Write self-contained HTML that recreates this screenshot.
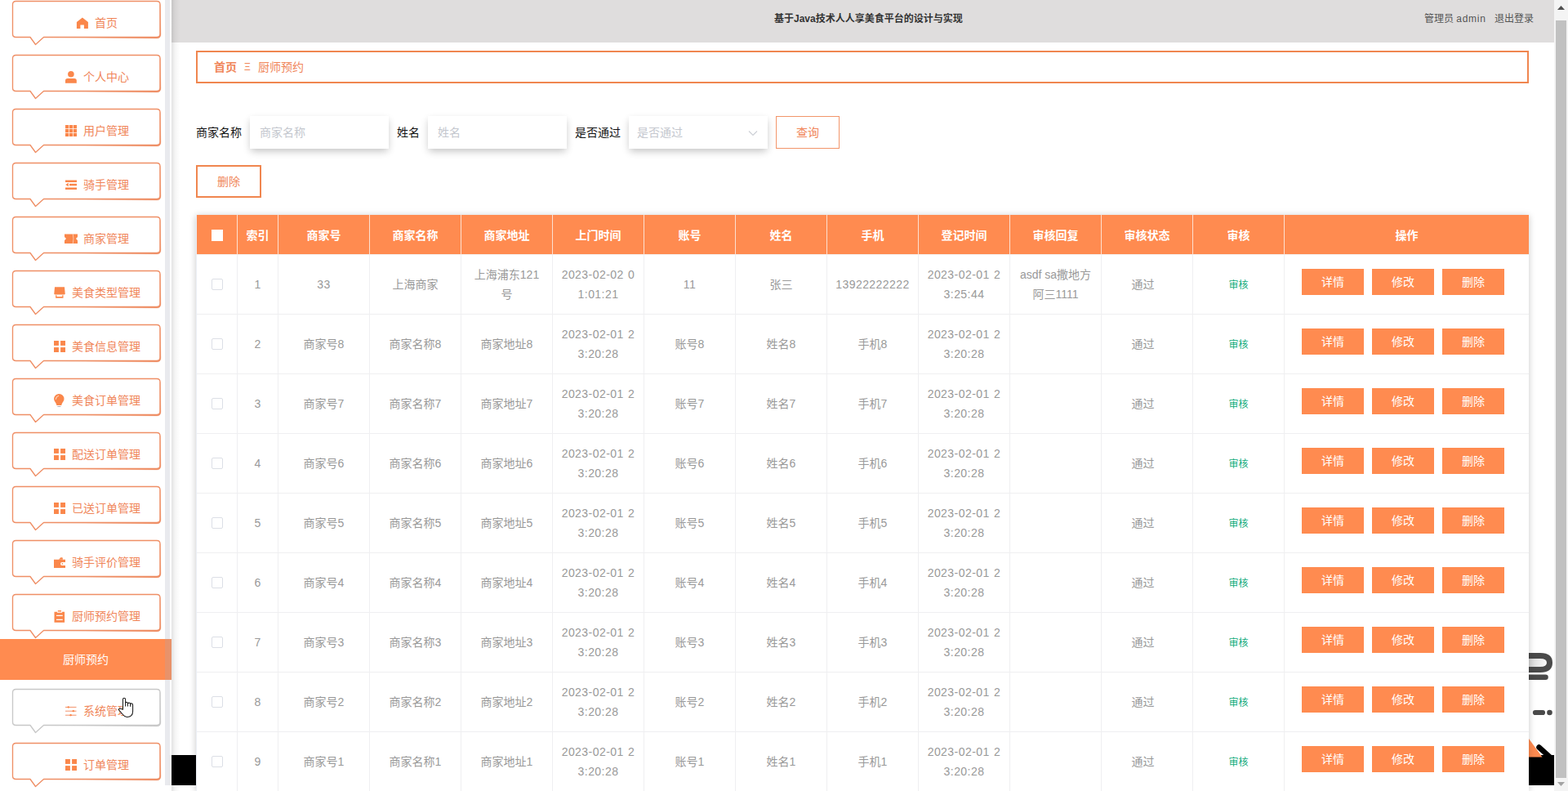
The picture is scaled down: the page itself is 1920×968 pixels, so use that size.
<!DOCTYPE html><html lang="zh"><head><meta charset="utf-8"><title>厨师预约</title><style>
*{box-sizing:border-box;margin:0;padding:0}
html,body{width:1920px;height:968px;overflow:hidden;background:#fff;font-family:"Liberation Sans","Noto Sans CJK SC",sans-serif;}
body{position:relative}
.abs{position:absolute}
#side{position:absolute;left:0;top:0;width:210px;height:968px;background:#fff;overflow:hidden}
#sscroll{position:absolute;left:202px;top:0;width:6px;height:961px;background:#e9eaee}
.mi{position:absolute;left:0;width:210px;height:56px}
.mi svg.bub{position:absolute;left:0;top:0}
.mi .lab{position:absolute;top:18px;height:20px;line-height:20px;font-size:14px;color:#f0865a;white-space:nowrap}
.mi svg.ic{position:absolute;top:21px;width:14px;height:14px;overflow:visible}
#act{position:absolute;left:0;top:782px;width:210px;height:50px;background:#ff8b50;color:#fff;font-size:14px;line-height:50px;text-align:center}
#hdr{position:absolute;left:210px;top:0;width:1693px;height:52px;background:#dfdddd}
#hdr .t{position:absolute;left:738px;top:15px;font-size:12px;font-weight:bold;color:#333;line-height:16px;white-space:nowrap}
#hdr .u{position:absolute;top:15px;font-size:12px;color:#555;line-height:16px;white-space:nowrap}
#shadowL{position:absolute;left:210px;top:0;width:10px;height:968px;background:linear-gradient(to right,rgba(0,0,0,.11),rgba(0,0,0,.04) 45%,rgba(0,0,0,0))}
#bc{position:absolute;left:240px;top:62px;width:1632px;height:40px;border:2px solid #f0864f;background:#fff;font-size:14px;color:#f0865a}
#bc span{position:absolute;top:8px;line-height:20px;white-space:nowrap}
.lbl{position:absolute;top:152px;font-size:14px;line-height:20px;color:#111;white-space:nowrap}
.inp{position:absolute;top:142px;width:170px;height:40px;background:#fff;box-shadow:0 4px 9px -1px rgba(0,0,0,.24);font-size:14px;color:#c4c7ce;line-height:40px;padding-left:12px;white-space:nowrap}
#qbtn{position:absolute;left:950px;top:142px;width:78px;height:40px;border:1px solid #f2956a;color:#f0865a;font-size:14px;line-height:38px;text-align:center;background:#fff}
#dbtn{position:absolute;left:240px;top:202px;width:80px;height:40px;border:2px solid #f0864f;color:#f0865a;font-size:14px;line-height:36px;text-align:center;background:#fff}
#tblwrap{position:absolute;left:240px;top:263px;width:1632px;height:705px;background:#fff;box-shadow:0 1px 8px rgba(0,0,0,.22);border-left:1px solid #ebeef5}
table{border-collapse:separate;border-spacing:0;table-layout:fixed;width:1631px;}
th{height:49px;border-bottom:1px solid #f4f0ee;background:#ff8b50;color:#fff;font-size:14px;font-weight:bold;text-align:center;border-right:1px solid #fde0d0;padding:2px 0 0 0;line-height:20px}
th:last-child{border-right:none}
td{height:73px;border-bottom:1px solid #efeff1;border-right:1px solid #efeff1;text-align:center;font-size:14px;line-height:24px;color:#999;padding:0 10px;vertical-align:middle}
td:last-child{border-right:none}
.cb{display:block;width:14px;height:14px;border:1px solid #dcdfe6;border-radius:2px;background:#fff;position:relative;left:18px;top:0}
th .cb{border-color:#fff;border-radius:0;top:0}
.sh{font-size:12px;color:#13ab7c}
.n{letter-spacing:.45px;word-spacing:1px}
.ops{position:relative;height:72px}
.btn{position:absolute;top:17px;width:76px;height:32px;background:#ff8b50;color:#fff;font-size:14px;line-height:32px;text-align:center}
#vs{position:absolute;left:1903px;top:0;width:17px;height:968px;background:#f4f4f4}
#vs .th{position:absolute;left:2px;top:25px;width:13px;height:927px;background:#c1c1c1}
</style></head><body>
<div class="abs" style="left:210px;top:924px;width:30px;height:37px;background:#000"></div>
<div class="abs" style="left:1872px;top:924px;width:31px;height:37px;background:#000"></div>
<svg class="abs" style="left:1872px;top:790px" width="31" height="140" viewBox="0 0 31 140"><defs><linearGradient id="ug" x1="0" x2="1" y1="0" y2="0"><stop offset="0" stop-color="#d4d4d4"/><stop offset="1" stop-color="#ffffff"/></linearGradient></defs><path d="M0,12.5 H14 Q25.5,12.5 25.5,21 Q25.5,29.5 14,29.5 H0 Z" fill="url(#ug)"/><path d="M0,12.5 H14 Q25.5,12.5 25.5,21 Q25.5,29.5 14,29.5 H0" fill="none" stroke="#4a4a4a" stroke-width="7"/><path d="M0,38.800 H20.500" stroke="#4a4a4a" stroke-width="6.600" stroke-linecap="round"/><path d="M8,82 H17" stroke="#4a4a4a" stroke-width="6.200" stroke-linecap="round"/><circle cx="25.500" cy="82" r="3.300" fill="#4a4a4a"/><path d="M0,114 L16.5,136.500 H0 Z" fill="#ff8b50"/><path d="M12.500,124.500 L33,143" fill="none" stroke="#000" stroke-width="6.500" stroke-linecap="round"/></svg>
<div id="hdr"><div class="t">基于Java技术人人享美食平台的设计与实现</div><div class="u" style="left:1534px">管理员 <span style="letter-spacing:.7px">admin</span></div><div class="u" style="left:1620px">退出登录</div></div>
<div id="side"><div id="sscroll"></div>
<div class="mi" style="top:0px"><svg class="bub" width="210" height="56" viewBox="0 0 210 56"><path d="M19.5,1.5 H192 Q196,1.5 196,5.5 V41.5 Q196,45.5 192,45.5 H53.5 L43.5,54.5 L37,45.5 H19.5 Q15.5,45.5 15.5,41.5 V5.5 Q15.5,1.5 19.5,1.5 Z" fill="#fff" stroke="#ef8f66" stroke-width="1.35" stroke-linejoin="round"/><path d="M60,45.5 H192 Q196,45.5 196,41.5 V5.5 L197,41.8 Q197,47 192,47 Z" fill="#ef8f66" stroke="#ef8f66" stroke-width="0.3"/></svg><svg class="ic" style="left:94px" viewBox="0 0 14 14" fill="#fa874b"><path d="M6.9,0.6 L13.9,5.9 V14 H8.9 V9.5 H4.4 V14 H-0.1 V5.9 Z"/></svg><div class="lab" style="left:116px">首页</div></div>
<div class="mi" style="top:66px"><svg class="bub" width="210" height="56" viewBox="0 0 210 56"><path d="M19.5,1.5 H192 Q196,1.5 196,5.5 V41.5 Q196,45.5 192,45.5 H53.5 L43.5,54.5 L37,45.5 H19.5 Q15.5,45.5 15.5,41.5 V5.5 Q15.5,1.5 19.5,1.5 Z" fill="#fff" stroke="#ef8f66" stroke-width="1.35" stroke-linejoin="round"/><path d="M60,45.5 H192 Q196,45.5 196,41.5 V5.5 L197,41.8 Q197,47 192,47 Z" fill="#ef8f66" stroke="#ef8f66" stroke-width="0.3"/></svg><svg class="ic" style="left:80px" viewBox="0 0 14 14" fill="#fa874b"><circle cx="6.9" cy="3.8" r="3.8"/><path d="M0,14.8 V11.6 Q0,8.9 2.8,8.9 H11 Q13.8,8.9 13.8,11.6 V14.8 Z"/></svg><div class="lab" style="left:102px">个人中心</div></div>
<div class="mi" style="top:132px"><svg class="bub" width="210" height="56" viewBox="0 0 210 56"><path d="M19.5,1.5 H192 Q196,1.5 196,5.5 V41.5 Q196,45.5 192,45.5 H53.5 L43.5,54.5 L37,45.5 H19.5 Q15.5,45.5 15.5,41.5 V5.5 Q15.5,1.5 19.5,1.5 Z" fill="#fff" stroke="#ef8f66" stroke-width="1.35" stroke-linejoin="round"/><path d="M60,45.5 H192 Q196,45.5 196,41.5 V5.5 L197,41.8 Q197,47 192,47 Z" fill="#ef8f66" stroke="#ef8f66" stroke-width="0.3"/></svg><svg class="ic" style="left:80px" viewBox="0 0 14 14" fill="#fa874b"><rect x="0" y="0" width="4.2" height="4.2"/><rect x="4.9" y="0" width="4.2" height="4.2"/><rect x="9.8" y="0" width="4.2" height="4.2"/><rect x="0" y="4.9" width="4.2" height="4.2"/><rect x="4.9" y="4.9" width="4.2" height="4.2"/><rect x="9.8" y="4.9" width="4.2" height="4.2"/><rect x="0" y="9.8" width="4.2" height="4.2"/><rect x="4.9" y="9.8" width="4.2" height="4.2"/><rect x="9.8" y="9.8" width="4.2" height="4.2"/></svg><div class="lab" style="left:102px">用户管理</div></div>
<div class="mi" style="top:198px"><svg class="bub" width="210" height="56" viewBox="0 0 210 56"><path d="M19.5,1.5 H192 Q196,1.5 196,5.5 V41.5 Q196,45.5 192,45.5 H53.5 L43.5,54.5 L37,45.5 H19.5 Q15.5,45.5 15.5,41.5 V5.5 Q15.5,1.5 19.5,1.5 Z" fill="#fff" stroke="#ef8f66" stroke-width="1.35" stroke-linejoin="round"/><path d="M60,45.5 H192 Q196,45.5 196,41.5 V5.5 L197,41.8 Q197,47 192,47 Z" fill="#ef8f66" stroke="#ef8f66" stroke-width="0.3"/></svg><svg class="ic" style="left:80px" viewBox="0 0 14 14" fill="#fa874b"><rect x="0" y="1.5" width="14" height="2.5"/><rect x="5" y="5.8" width="9" height="2.5"/><rect x="0" y="10.5" width="14" height="2.5"/><path d="M0.2,7 L3.8,4.7 V9.3 Z"/></svg><div class="lab" style="left:102px">骑手管理</div></div>
<div class="mi" style="top:264px"><svg class="bub" width="210" height="56" viewBox="0 0 210 56"><path d="M19.5,1.5 H192 Q196,1.5 196,5.5 V41.5 Q196,45.5 192,45.5 H53.5 L43.5,54.5 L37,45.5 H19.5 Q15.5,45.5 15.5,41.5 V5.5 Q15.5,1.5 19.5,1.5 Z" fill="#fff" stroke="#ef8f66" stroke-width="1.35" stroke-linejoin="round"/><path d="M60,45.5 H192 Q196,45.5 196,41.5 V5.5 L197,41.8 Q197,47 192,47 Z" fill="#ef8f66" stroke="#ef8f66" stroke-width="0.3"/></svg><svg class="ic" style="left:80px" viewBox="0 0 14 14" fill="#fa874b"><path d="M-1,1.4 H15 V5 L13,7.1 L15,9.2 V12.9 H-1 V9.2 L1,7.1 L-1,5 Z"/><path d="M9.3,1.4 Q10.6,7.1 9.3,12.9" fill="none" stroke="#fff" stroke-width="0.7" opacity="0.75"/></svg><div class="lab" style="left:102px">商家管理</div></div>
<div class="mi" style="top:330px"><svg class="bub" width="210" height="56" viewBox="0 0 210 56"><path d="M19.5,1.5 H192 Q196,1.5 196,5.5 V41.5 Q196,45.5 192,45.5 H53.5 L43.5,54.5 L37,45.5 H19.5 Q15.5,45.5 15.5,41.5 V5.5 Q15.5,1.5 19.5,1.5 Z" fill="#fff" stroke="#ef8f66" stroke-width="1.35" stroke-linejoin="round"/><path d="M60,45.5 H192 Q196,45.5 196,41.5 V5.5 L197,41.8 Q197,47 192,47 Z" fill="#ef8f66" stroke="#ef8f66" stroke-width="0.3"/></svg><svg class="ic" style="left:66px" viewBox="0 0 14 14" fill="#fa874b"><path d="M1,0.2 H13 L13.7,8.2 Q13.7,9.6 12.3,9.6 H1.7 Q0.3,9.6 0.3,8.2 Z"/><path d="M2.1,10.2 H3.4 V12 H10.2 V10.2 H11.5 V13.8 H2.1 Z"/></svg><div class="lab" style="left:88px">美食类型管理</div></div>
<div class="mi" style="top:396px"><svg class="bub" width="210" height="56" viewBox="0 0 210 56"><path d="M19.5,1.5 H192 Q196,1.5 196,5.5 V41.5 Q196,45.5 192,45.5 H53.5 L43.5,54.5 L37,45.5 H19.5 Q15.5,45.5 15.5,41.5 V5.5 Q15.5,1.5 19.5,1.5 Z" fill="#fff" stroke="#ef8f66" stroke-width="1.35" stroke-linejoin="round"/><path d="M60,45.5 H192 Q196,45.5 196,41.5 V5.5 L197,41.8 Q197,47 192,47 Z" fill="#ef8f66" stroke="#ef8f66" stroke-width="0.3"/></svg><svg class="ic" style="left:66px" viewBox="0 0 14 14" fill="#fa874b"><rect x="0" y="0" width="5.9" height="5.9"/><rect x="8.1" y="0" width="5.9" height="5.9"/><rect x="0" y="8.1" width="5.9" height="5.9"/><rect x="8.1" y="8.1" width="5.9" height="5.9"/></svg><div class="lab" style="left:88px">美食信息管理</div></div>
<div class="mi" style="top:462px"><svg class="bub" width="210" height="56" viewBox="0 0 210 56"><path d="M19.5,1.5 H192 Q196,1.5 196,5.5 V41.5 Q196,45.5 192,45.5 H53.5 L43.5,54.5 L37,45.5 H19.5 Q15.5,45.5 15.5,41.5 V5.5 Q15.5,1.5 19.5,1.5 Z" fill="#fff" stroke="#ef8f66" stroke-width="1.35" stroke-linejoin="round"/><path d="M60,45.5 H192 Q196,45.5 196,41.5 V5.5 L197,41.8 Q197,47 192,47 Z" fill="#ef8f66" stroke="#ef8f66" stroke-width="0.3"/></svg><svg class="ic" style="left:66px" viewBox="0 0 14 14" fill="#fa874b"><path d="M6.3,-1.1 A6.2,6.2 0 0 1 12.5,5.1 C12.5,8.5 9.6,10 9.4,13 H3.3 C3.1,10 0.1,8.500 0.1,5.1 A6.2,6.2 0 0 1 6.3,-1.1 Z"/><path d="M2.3,5.400 A4.200,4.200 0 0 1 5.600,1.400" fill="none" stroke="#fff" stroke-width="0.9" stroke-linecap="round" opacity="0.85"/><rect x="4.2" y="14.1" width="4.4" height="0.9" rx="0.4" fill="#b9b0b6"/></svg><div class="lab" style="left:88px">美食订单管理</div></div>
<div class="mi" style="top:528px"><svg class="bub" width="210" height="56" viewBox="0 0 210 56"><path d="M19.5,1.5 H192 Q196,1.5 196,5.5 V41.5 Q196,45.5 192,45.5 H53.5 L43.5,54.5 L37,45.5 H19.5 Q15.5,45.5 15.5,41.5 V5.5 Q15.5,1.5 19.5,1.5 Z" fill="#fff" stroke="#ef8f66" stroke-width="1.35" stroke-linejoin="round"/><path d="M60,45.5 H192 Q196,45.5 196,41.5 V5.5 L197,41.8 Q197,47 192,47 Z" fill="#ef8f66" stroke="#ef8f66" stroke-width="0.3"/></svg><svg class="ic" style="left:66px" viewBox="0 0 14 14" fill="#fa874b"><rect x="0" y="0" width="5.9" height="5.9"/><rect x="8.1" y="0" width="5.9" height="5.9"/><rect x="0" y="8.1" width="5.9" height="5.9"/><rect x="8.1" y="8.1" width="5.9" height="5.9"/></svg><div class="lab" style="left:88px">配送订单管理</div></div>
<div class="mi" style="top:594px"><svg class="bub" width="210" height="56" viewBox="0 0 210 56"><path d="M19.5,1.5 H192 Q196,1.5 196,5.5 V41.5 Q196,45.5 192,45.5 H53.5 L43.5,54.5 L37,45.5 H19.5 Q15.5,45.5 15.5,41.5 V5.5 Q15.5,1.5 19.5,1.5 Z" fill="#fff" stroke="#ef8f66" stroke-width="1.35" stroke-linejoin="round"/><path d="M60,45.5 H192 Q196,45.5 196,41.5 V5.5 L197,41.8 Q197,47 192,47 Z" fill="#ef8f66" stroke="#ef8f66" stroke-width="0.3"/></svg><svg class="ic" style="left:66px" viewBox="0 0 14 14" fill="#fa874b"><rect x="0" y="0" width="5.9" height="5.9"/><rect x="8.1" y="0" width="5.9" height="5.9"/><rect x="0" y="8.1" width="5.9" height="5.9"/><rect x="8.1" y="8.1" width="5.9" height="5.9"/></svg><div class="lab" style="left:88px">已送订单管理</div></div>
<div class="mi" style="top:660px"><svg class="bub" width="210" height="56" viewBox="0 0 210 56"><path d="M19.5,1.5 H192 Q196,1.5 196,5.5 V41.5 Q196,45.5 192,45.5 H53.5 L43.5,54.5 L37,45.5 H19.5 Q15.5,45.5 15.5,41.5 V5.5 Q15.5,1.5 19.5,1.5 Z" fill="#fff" stroke="#ef8f66" stroke-width="1.35" stroke-linejoin="round"/><path d="M60,45.5 H192 Q196,45.5 196,41.5 V5.5 L197,41.8 Q197,47 192,47 Z" fill="#ef8f66" stroke="#ef8f66" stroke-width="0.3"/></svg><svg class="ic" style="left:66px" viewBox="0 0 14 14" fill="#fa874b"><path d="M0,3.7 H14 V6.9 H10 A2,2 0 0 0 10,10.9 H14 V14 H0 Z"/><path d="M6,3.8 L8.2,1.200 H10 Q10.8,1.2 10.800,2 V3.8 Z"/><circle cx="10.400" cy="8.900" r="0.8"/></svg><div class="lab" style="left:88px">骑手评价管理</div></div>
<div class="mi" style="top:726px"><svg class="bub" width="210" height="56" viewBox="0 0 210 56"><path d="M19.5,1.5 H192 Q196,1.5 196,5.5 V41.5 Q196,45.5 192,45.5 H53.5 L43.5,54.5 L37,45.5 H19.5 Q15.5,45.5 15.5,41.5 V5.5 Q15.5,1.5 19.5,1.5 Z" fill="#fff" stroke="#ef8f66" stroke-width="1.35" stroke-linejoin="round"/><path d="M60,45.5 H192 Q196,45.5 196,41.5 V5.5 L197,41.8 Q197,47 192,47 Z" fill="#ef8f66" stroke="#ef8f66" stroke-width="0.3"/></svg><svg class="ic" style="left:66px" viewBox="0 0 14 14" fill="#fa874b"><path d="M0.5,1.7 H4 V2.7 H10 V1.7 H13.1 V14.8 H0.5 Z M3,5.800 V7 H10.7 V5.800 Z M3,10.800 V12 H10.7 V10.800 Z" fill-rule="evenodd"/><rect x="4.700" y="-0.100" width="4.400" height="1.600" rx="0.600"/></svg><div class="lab" style="left:88px">厨师预约管理</div></div>
<div class="mi" style="top:842px"><svg class="bub" width="210" height="56" viewBox="0 0 210 56"><path d="M19.5,1.5 H192 Q196,1.5 196,5.5 V41.5 Q196,45.5 192,45.5 H53.5 L43.5,54.5 L37,45.5 H19.5 Q15.5,45.5 15.5,41.5 V5.5 Q15.5,1.5 19.5,1.5 Z" fill="#fff" stroke="#c8c8c8" stroke-width="1.35" stroke-linejoin="round"/><path d="M60,45.5 H192 Q196,45.5 196,41.5 V5.5 L197,41.8 Q197,47 192,47 Z" fill="#c8c8c8" stroke="#c8c8c8" stroke-width="0.3"/></svg><svg class="ic" style="left:80px" viewBox="0 0 14 14" fill="#fa874b"><g fill="none" stroke="#f0865a" stroke-width="0.9"><path d="M0,2.4 H13.500 M0,7.2 H13.500 M0,12.2 H13.500"/></g><path d="M2,2.400 L3.750,1 L5.500,2.400 L3.750,3.800 Z M8,7.200 L9.800,5.800 L11.600,7.200 L9.800,8.600 Z M4.800,12.200 L6.600,10.800 L8.400,12.200 L6.600,13.600 Z"/></svg><div class="lab" style="left:102px">系统管理</div></div>
<div class="mi" style="top:908px"><svg class="bub" width="210" height="56" viewBox="0 0 210 56"><path d="M19.5,1.5 H192 Q196,1.5 196,5.5 V41.5 Q196,45.5 192,45.5 H53.5 L43.5,54.5 L37,45.5 H19.5 Q15.5,45.5 15.5,41.5 V5.5 Q15.5,1.5 19.5,1.5 Z" fill="#fff" stroke="#ef8f66" stroke-width="1.35" stroke-linejoin="round"/><path d="M60,45.5 H192 Q196,45.5 196,41.5 V5.5 L197,41.8 Q197,47 192,47 Z" fill="#ef8f66" stroke="#ef8f66" stroke-width="0.3"/></svg><svg class="ic" style="left:80px" viewBox="0 0 14 14" fill="#fa874b"><rect x="0" y="0" width="5.9" height="5.9"/><rect x="8.1" y="0" width="5.9" height="5.9"/><rect x="0" y="8.1" width="5.9" height="5.9"/><rect x="8.1" y="8.1" width="5.9" height="5.9"/></svg><div class="lab" style="left:102px">订单管理</div></div>
<div id="act">厨师预约<div class="abs" style="left:202px;top:0;width:8px;height:50px;background:#e8926a"></div></div>
</div>
<div id="shadowL"></div>
<svg class="abs" style="left:138px;top:848px" width="34" height="36" viewBox="0 0 34 36"><path d="M12.5,20 V8 Q12.5,6.2 14,6.2 Q15.6,6.2 15.6,8 V12.2 Q15.8,11.200 17,11.200 Q18.400,11.300 18.400,13 Q18.800,12.100 20,12.100 Q21.600,12.200 21.600,13.800 Q22,12.800 23.100,12.800 Q24.600,12.900 24.600,14.800 V22.500 Q24.600,29.400 17.500,29.400 Q14.500,29.400 12.500,26.500 L7.800,21.200 Q6.800,19.800 8.200,19.200 Q9.400,18.800 10.500,19.600 L12.500,20.300 Z" fill="#fff" stroke="#1a1a1a" stroke-width="1.05" stroke-linejoin="round"/><path d="M15.600,12 V16.400 M18.400,13 V16.600 M21.600,13.800 V16.800" fill="none" stroke="#1a1a1a" stroke-width="1.05"/></svg>
<div id="bc"><span style="left:20px;font-weight:bold">首页</span><span style="left:57px;font-size:12px">Ξ</span><span style="left:74px">厨师预约</span></div>
<div class="lbl" style="left:240px">商家名称</div><div class="inp" style="left:306px">商家名称</div>
<div class="lbl" style="left:486px">姓名</div><div class="inp" style="left:524px">姓名</div>
<div class="lbl" style="left:704px">是否通过</div><div class="inp" style="left:770px;padding-left:10px">是否通过<svg class="abs" style="left:146px;top:17px" width="12" height="8" viewBox="0 0 12 8"><path d="M1,1.5 L6,6.5 L11,1.5" fill="none" stroke="#cdd0d6" stroke-width="1.2"/></svg></div>
<div id="qbtn">查询</div><div id="dbtn">删除</div>
<div id="tblwrap"><table><colgroup><col style="width:50px"><col style="width:50px"><col style="width:112px"><col style="width:112px"><col style="width:112px"><col style="width:112px"><col style="width:112px"><col style="width:112px"><col style="width:112px"><col style="width:112px"><col style="width:112px"><col style="width:112px"><col style="width:112px"><col style="width:299px"></colgroup><thead><tr><th><span class="cb"></span></th><th>索引</th><th>商家号</th><th>商家名称</th><th>商家地址</th><th>上门时间</th><th>账号</th><th>姓名</th><th>手机</th><th>登记时间</th><th>审核回复</th><th>审核状态</th><th>审核</th><th>操作</th></tr></thead><tbody>
<tr><td style="padding:0"><span class="cb"></span></td><td class="n">1</td><td class="n">33</td><td>上海商家</td><td>上海浦东121<br>号</td><td class="n">2023-02-02 0<br>1:01:21</td><td class="n">11</td><td>张三</td><td class="n">13922222222</td><td class="n">2023-02-01 2<br>3:25:44</td><td>asdf sa撒地方<br>阿三1111</td><td style="padding-right:20px">通过</td><td><span class="sh">审核</span></td><td style="padding:0"><div class="ops"><div class="btn" style="left:21px">详情</div><div class="btn" style="left:107px">修改</div><div class="btn" style="left:193px">删除</div></div></td></tr>
<tr><td style="padding:0"><span class="cb"></span></td><td class="n">2</td><td>商家号8</td><td>商家名称8</td><td>商家地址8</td><td class="n">2023-02-01 2<br>3:20:28</td><td>账号8</td><td>姓名8</td><td>手机8</td><td class="n">2023-02-01 2<br>3:20:28</td><td></td><td style="padding-right:20px">通过</td><td><span class="sh">审核</span></td><td style="padding:0"><div class="ops"><div class="btn" style="left:21px">详情</div><div class="btn" style="left:107px">修改</div><div class="btn" style="left:193px">删除</div></div></td></tr>
<tr><td style="padding:0"><span class="cb"></span></td><td class="n">3</td><td>商家号7</td><td>商家名称7</td><td>商家地址7</td><td class="n">2023-02-01 2<br>3:20:28</td><td>账号7</td><td>姓名7</td><td>手机7</td><td class="n">2023-02-01 2<br>3:20:28</td><td></td><td style="padding-right:20px">通过</td><td><span class="sh">审核</span></td><td style="padding:0"><div class="ops"><div class="btn" style="left:21px">详情</div><div class="btn" style="left:107px">修改</div><div class="btn" style="left:193px">删除</div></div></td></tr>
<tr><td style="padding:0"><span class="cb"></span></td><td class="n">4</td><td>商家号6</td><td>商家名称6</td><td>商家地址6</td><td class="n">2023-02-01 2<br>3:20:28</td><td>账号6</td><td>姓名6</td><td>手机6</td><td class="n">2023-02-01 2<br>3:20:28</td><td></td><td style="padding-right:20px">通过</td><td><span class="sh">审核</span></td><td style="padding:0"><div class="ops"><div class="btn" style="left:21px">详情</div><div class="btn" style="left:107px">修改</div><div class="btn" style="left:193px">删除</div></div></td></tr>
<tr><td style="padding:0"><span class="cb"></span></td><td class="n">5</td><td>商家号5</td><td>商家名称5</td><td>商家地址5</td><td class="n">2023-02-01 2<br>3:20:28</td><td>账号5</td><td>姓名5</td><td>手机5</td><td class="n">2023-02-01 2<br>3:20:28</td><td></td><td style="padding-right:20px">通过</td><td><span class="sh">审核</span></td><td style="padding:0"><div class="ops"><div class="btn" style="left:21px">详情</div><div class="btn" style="left:107px">修改</div><div class="btn" style="left:193px">删除</div></div></td></tr>
<tr><td style="padding:0"><span class="cb"></span></td><td class="n">6</td><td>商家号4</td><td>商家名称4</td><td>商家地址4</td><td class="n">2023-02-01 2<br>3:20:28</td><td>账号4</td><td>姓名4</td><td>手机4</td><td class="n">2023-02-01 2<br>3:20:28</td><td></td><td style="padding-right:20px">通过</td><td><span class="sh">审核</span></td><td style="padding:0"><div class="ops"><div class="btn" style="left:21px">详情</div><div class="btn" style="left:107px">修改</div><div class="btn" style="left:193px">删除</div></div></td></tr>
<tr><td style="padding:0"><span class="cb"></span></td><td class="n">7</td><td>商家号3</td><td>商家名称3</td><td>商家地址3</td><td class="n">2023-02-01 2<br>3:20:28</td><td>账号3</td><td>姓名3</td><td>手机3</td><td class="n">2023-02-01 2<br>3:20:28</td><td></td><td style="padding-right:20px">通过</td><td><span class="sh">审核</span></td><td style="padding:0"><div class="ops"><div class="btn" style="left:21px">详情</div><div class="btn" style="left:107px">修改</div><div class="btn" style="left:193px">删除</div></div></td></tr>
<tr><td style="padding:0"><span class="cb"></span></td><td class="n">8</td><td>商家号2</td><td>商家名称2</td><td>商家地址2</td><td class="n">2023-02-01 2<br>3:20:28</td><td>账号2</td><td>姓名2</td><td>手机2</td><td class="n">2023-02-01 2<br>3:20:28</td><td></td><td style="padding-right:20px">通过</td><td><span class="sh">审核</span></td><td style="padding:0"><div class="ops"><div class="btn" style="left:21px">详情</div><div class="btn" style="left:107px">修改</div><div class="btn" style="left:193px">删除</div></div></td></tr>
<tr><td style="padding:0"><span class="cb"></span></td><td class="n">9</td><td>商家号1</td><td>商家名称1</td><td>商家地址1</td><td class="n">2023-02-01 2<br>3:20:28</td><td>账号1</td><td>姓名1</td><td>手机1</td><td class="n">2023-02-01 2<br>3:20:28</td><td></td><td style="padding-right:20px">通过</td><td><span class="sh">审核</span></td><td style="padding:0"><div class="ops"><div class="btn" style="left:21px">详情</div><div class="btn" style="left:107px">修改</div><div class="btn" style="left:193px">删除</div></div></td></tr>
</tbody></table></div>
<div id="vs"><div class="th"></div><svg class="abs" style="left:4px;top:7px" width="9" height="5" viewBox="0 0 9 5"><path d="M0,5 L4.5,0 L9,5 Z" fill="#505050"/></svg><svg class="abs" style="left:4px;top:957px" width="9" height="5" viewBox="0 0 9 5"><path d="M0,0 L4.5,5 L9,0 Z" fill="#a3a3a3"/></svg></div>
</body></html>
